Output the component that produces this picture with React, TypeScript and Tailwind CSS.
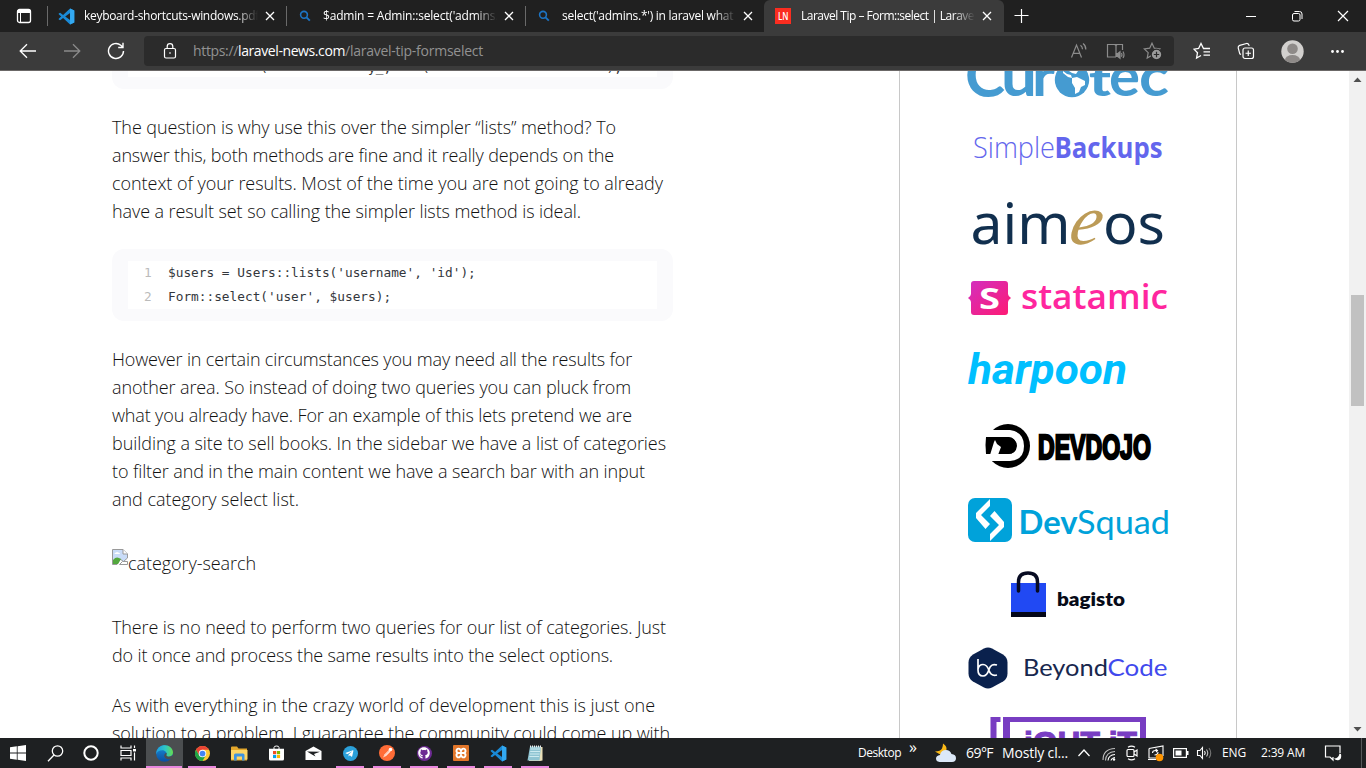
import React, { useLayoutEffect, useRef, useState } from "react";
import { FaGithub, FaTelegramPlane } from "react-icons/fa";

/* One line of text whose tracking is set so that it spans `w` pixels. */
function Fit({ w, children, className = "" }: { w: number; children: React.ReactNode; className?: string }) {
  const ref = useRef<HTMLSpanElement>(null);
  const [ls, setLs] = useState(0);
  useLayoutEffect(() => {
    const el = ref.current;
    if (!el) return;
    const n = (el.textContent || "").length;
    setLs((w - el.getBoundingClientRect().width) / n);
  }, [w]);
  return (
    <span ref={ref} className={`inline-block whitespace-pre ${className}`} style={{ letterSpacing: ls }}>
      {children}
    </span>
  );
}

function VsCode({ size }: { size: number }) {
  return (
    <svg width={size} height={size} viewBox="0 0 24 24">
      <path fillRule="evenodd" fill="#1a8ad6" d="M17 .8 7.2 10 3 6.8 1 7.800v1L4.500 12 1 15.200v1l2 1L7.200 14 17 23.200l6-2.700V3.500ZM17 7v10l-6.800-5Z" />
      <path fill="#33a9f2" d="M17 .8 23 3.500v17l-6 2.700Z" />
    </svg>
  );
}

const SearchFav = () => (
  <svg width="12" height="12" viewBox="0 0 12 12" fill="none" stroke="#1c74c4" strokeWidth="1.600">
    <circle cx="5" cy="4.800" r="3.400" />
    <path d="M7.500 7.300 10.800 10.700" strokeWidth="1.900" />
  </svg>
);

const LaravelNews = () => (
  <svg width="16" height="16" viewBox="0 0 16 16">
    <rect width="16" height="16" fill="#fb2d20" />
    <text x="3" y="11.800" fontSize="10.500" fontWeight="600" fontFamily="Open Sans" fill="#fff" textLength="10.500" lengthAdjust="spacingAndGlyphs">LN</text>
  </svg>
);

const CloseX = () => (
  <svg width="10" height="10" viewBox="0 0 10 10" stroke="#fff" strokeWidth="1.300">
    <path d="M1 1 9 9M9 1 1 9" />
  </svg>
);

function Tab({ icon, title, w, active }: { icon: React.ReactNode; title: string; w: number; active?: boolean }) {
  return (
    <div className={`flex h-8 w-[239px] shrink-0 items-center ${active ? "w-[240px] rounded-t-md bg-[#3b3b3b]" : ""}`}>
      <div className={`h-5 w-px ${active ? "" : "bg-[#6a6a6a]"}`} />
      <div className="flex w-9 items-center justify-center">{icon}</div>
      <div className="w-[174px] overflow-hidden text-[12px] leading-4 text-white [mask-image:linear-gradient(to_right,black_152px,transparent_174px)]">
        <Fit w={w}>{title}</Fit>
      </div>
      <div className="ml-[7px] flex w-[10px]"><CloseX /></div>
    </div>
  );
}

function TabStrip() {
  return (
    <div className="flex h-8 w-full shrink-0 items-center bg-[#202020]">
      <div className="flex w-[47px] justify-center">
        <svg width="16" height="16" viewBox="0 0 16 16" fill="none" stroke="#fff">
          <rect x="1.500" y="1.500" width="13" height="13" rx="2" strokeWidth="1.300" />
          <path d="M1.500 3.500h13" strokeWidth="3" />
          <path d="M4.500 4v10" />
        </svg>
      </div>
      <Tab icon={<VsCode size={17} />} title="keyboard-shortcuts-windows.pdf" w={175} />
      <Tab icon={<SearchFav />} title="$admin = Admin::select('admins.*'" w={184} />
      <Tab icon={<SearchFav />} title="select('admins.*') in laravel what does" w={200} />
      <Tab icon={<LaravelNews />} title="Laravel Tip – Form::select | Laravel News" w={207} active />
      <svg className="ml-[10px]" width="16" height="16" viewBox="0 0 16 16" stroke="#fff" strokeWidth="1.200">
        <path d="M7.500 1v14M.5 7.500h14" />
      </svg>
      <div className="ml-auto flex items-center">
        <svg width="46" height="32" viewBox="0 0 46 32" stroke="#fff"><path d="M18 16.500h10" /></svg>
        <svg width="46" height="32" viewBox="0 0 46 32" fill="none" stroke="#fff">
          <rect x="18.500" y="13.500" width="7.500" height="7.500" rx="1.500" />
          <path d="M20.500 11.500h5a2.500 2.500 0 0 1 2.500 2.500v5" />
        </svg>
        <svg width="46" height="32" viewBox="0 0 46 32" stroke="#fff" strokeWidth="1.200"><path d="M18 11 28 21M28 11 18 21" /></svg>
      </div>
    </div>
  );
}

const STAR = "M9 1.200 11.300 6.200 16.800 6.900 12.800 10.600 13.800 16 9 13.300 4.200 16 5.200 10.600 1.200 6.900 6.700 6.200Z";

function Toolbar() {
  return (
    <div className="flex h-[39px] w-full shrink-0 items-center border-b border-[#6b6867] bg-[#3b3b3b]">
      <svg className="ml-[19px]" width="18" height="16" viewBox="0 0 18 16" fill="none" stroke="#fff" strokeWidth="1.300"><path d="M17 8H1.500M8 1.200 1.200 8 8 14.800" /></svg>
      <svg className="ml-[26px]" width="18" height="16" viewBox="0 0 18 16" fill="none" stroke="#8a8a8a" strokeWidth="1.300"><path d="M1 8h15.500M10 1.200 16.800 8 10 14.800" /></svg>
      <svg className="ml-[26px]" width="18" height="18" viewBox="0 0 18 18" fill="none" stroke="#fff" strokeWidth="1.400">
        <path d="M16.500 9A7.500 7.500 0 1 1 13.800 3.200L15.700 5M16 .8V5.500H11.200" />
      </svg>
      <div className="ml-[19px] flex h-[30px] w-[1030px] items-center rounded bg-[#2b2b2b]">
        <svg className="ml-[19px]" width="14" height="16" viewBox="0 0 14 16" fill="none" stroke="#fff" strokeWidth="1.200">
          <rect x="1.500" y="5.500" width="11" height="9.500" rx="1.500" />
          <path d="M4.200 5.500V3.500a2.800 2.800 0 0 1 5.600 0v2" />
          <rect x="6.300" y="9.300" width="1.400" height="1.400" fill="#fff" stroke="none" />
        </svg>
        <div className="ml-4 text-[14px] leading-5 text-[#929292]">
          <Fit w={45}>https://</Fit>
          <Fit w={107} className="text-white">laravel-news.com</Fit>
          <Fit w={138}>/laravel-tip-formselect</Fit>
        </div>
        <div className="ml-auto flex items-center pr-[11px]">
          <svg width="18" height="18" viewBox="0 0 18 18" fill="none" stroke="#8c8c8c" strokeWidth="1.200">
            <path d="M1.500 15.500 6.500 3l5 12.500M3.200 11.300h6.600M10.500 3.200q2 1.500 2 4M13 1.500q3 2.300 2.800 6" />
          </svg>
          <svg className="ml-[18px]" width="20" height="18" viewBox="0 0 20 18" fill="none" stroke="#8c8c8c" strokeWidth="1.200">
            <path d="M10 15H1.500V2.500h7.200L10 3.500V15M9 2.500h7.500V8M10 3.500l1-1" />
            <path d="M10.500 11.500h1.300L14 9.800v6.500L11.800 14.500h-1.300Z" fill="#8c8c8c" />
            <path d="M15.500 11q1 1.800 0 3.800M17 9.500q2 3.500 0 6.500" />
          </svg>
          <svg className="ml-[17px]" width="20" height="18" viewBox="0 0 20 18" fill="none" stroke="#8c8c8c" strokeWidth="1.200">
            <path d={STAR} />
            <circle cx="13.500" cy="12.500" r="5.300" fill="#9a9a9a" stroke="#2b2b2b" />
            <path d="M13.500 9.800v5.400M10.800 12.500h5.400" stroke="#2b2b2b" />
          </svg>
        </div>
      </div>
      <svg className="ml-[19px]" width="18" height="18" viewBox="0 0 18 18" fill="none" stroke="#fff" strokeWidth="1.300">
        <path d="M14 6.500H10.500L8 1.500 5.600 6.500 1 7.200 4.500 10.700 3.600 16 8 13.500M10.500 9.800H17M10.500 13.200H17M13 6.500h4" />
      </svg>
      <svg className="ml-[26px]" width="18" height="18" viewBox="0 0 18 18" fill="none" stroke="#fff" strokeWidth="1.200">
        <rect x="6" y="6" width="10.500" height="10.500" rx="2" />
        <path d="M11.250 8.500v5.500M8.500 11.250H14M4 12.500 2.800 11.800 1.200 5.800Q.9 4 2.700 3.400L9.500 1.500Q11.500 1.200 12.300 3.800" />
      </svg>
      <svg className="ml-[26px]" width="23" height="23" viewBox="0 0 23 23">
        <defs><clipPath id="ava"><circle cx="11.500" cy="11.500" r="11.200" /></clipPath></defs>
        <g clipPath="url(#ava)">
          <rect width="23" height="23" fill="#d2d0ce" />
          <circle cx="11.500" cy="8.800" r="5.300" fill="#8e8a88" />
          <ellipse cx="11.500" cy="20" rx="7.500" ry="5" fill="#8e8a88" />
        </g>
      </svg>
      <svg className="ml-[26px]" width="15" height="5" viewBox="0 0 15 5" fill="#fff">
        <circle cx="2.500" cy="2.500" r="1.400" /><circle cx="7.500" cy="2.500" r="1.400" /><circle cx="12.500" cy="2.500" r="1.400" />
      </svg>
    </div>
  );
}

function Para({ lines, className = "" }: { lines: [string, number][]; className?: string }) {
  return (
    <p className={`text-[18px] leading-7 font-light text-[#111] ${className}`}>
      {lines.map(([t, w]) => (
        <span key={t} className="block h-7"><Fit w={w}>{t}</Fit></span>
      ))}
    </p>
  );
}

function Article() {
  return (
    <div className="ml-28 w-[561px] shrink-0">
      <div className="h-[18px] overflow-hidden rounded-b-xl bg-[#fafafc] px-4">
        <div className="flex h-[6px] flex-col justify-end overflow-hidden bg-white font-['DejaVu_Sans_Mono',monospace] text-[12.790px] text-[#333]">
          <span className="mb-[2px] block pl-10 leading-[14px] whitespace-pre">{"            (             y_,    (                       );"}</span>
        </div>
      </div>
      <Para
        className="mt-6"
        lines={[
          ["The question is why use this over the simpler “lists” method? To", 504],
          ["answer this, both methods are fine and it really depends on the", 502],
          ["context of your results. Most of the time you are not going to already", 551],
          ["have a result set so calling the simpler lists method is ideal.", 469],
        ]}
      />
      <div className="mt-6 h-[72px] rounded-xl bg-[#fafafc] px-4 py-3">
        <div className="h-12 bg-white font-['DejaVu_Sans_Mono',monospace] text-[12.790px] leading-6 whitespace-pre text-[#33373c]">
          <div className="flex"><span className="w-10 pl-4 text-[#bbb]">1</span>{"$users = Users::lists('username', 'id');"}</div>
          <div className="flex"><span className="w-10 pl-4 text-[#bbb]">2</span>{"Form::select('user', $users);"}</div>
        </div>
      </div>
      <Para
        className="mt-6"
        lines={[
          ["However in certain circumstances you may need all the results for", 520],
          ["another area. So instead of doing two queries you can pluck from", 519],
          ["what you already have. For an example of this lets pretend we are", 520],
          ["building a site to sell books. In the sidebar we have a list of categories", 554],
          ["to filter and in the main content we have a search bar with an input", 533],
          ["and category select list.", 187],
        ]}
      />
      <div className="mt-9 flex h-[30px] text-[18px] leading-7 font-light text-[#111]">
        <svg width="16" height="16" viewBox="0 0 16 16">
          <path d="M.5.500h10.500l4.500 4.500V9l-4 3.500L8 10 5 15.500H.500Z" fill="#c9dcf8" stroke="#999" />
          <path d="M11 .5V5h4.500" fill="#fff" stroke="#999" />
          <path d="M1 15v-4q3-3.500 6-2l2 1-3 5Z" fill="#53a83d" />
          <path d="M2.500 5q0-1.500 1.500-1.500 1-1.200 2.200 0Q8 3.500 8 5Z" fill="#fff" />
          <path d="m7.500 15.500 3-3h5v3Z" fill="#fff" stroke="#999" />
        </svg>
        <Fit w={128}>category-search</Fit>
      </div>
      <Para
        className="mt-[34px]"
        lines={[
          ["There is no need to perform two queries for our list of categories. Just", 554],
          ["do it once and process the same results into the select options.", 501],
        ]}
      />
      <Para
        className="mt-[22px]"
        lines={[
          ["As with everything in the crazy world of development this is just one", 543],
          ["solution to a problem. I guarantee the community could come up with", 558],
        ]}
      />
    </div>
  );
}

/* A sponsor row; the drawing inside uses page coordinates starting at (900, y). */
function Logo({ y, h, children }: { y: number; h: number; children: React.ReactNode }) {
  return (
    <svg className="block shrink-0" width="336" height={h} viewBox={`900 ${y} 336 ${h}`}>
      {children}
    </svg>
  );
}

function T({ x, y, s, w, f = "Open Sans", b = 400, c, i, children }: { x: number; y: number; s: number; w: number; f?: string; b?: number; c: string; i?: boolean; children: string }) {
  return (
    <text x={x} y={y} fontSize={s} fontFamily={f} fontWeight={b} fill={c} fontStyle={i ? "italic" : "normal"} textLength={w} lengthAdjust="spacingAndGlyphs">
      {children}
    </text>
  );
}

function Sponsors() {
  return (
    <div className="ml-[226px] flex w-[338px] shrink-0 flex-col border-x border-[#c8c8c8]">
      <Logo y={71} h={44}>
        <T x={965} y={96.500} s={61} w={40} f="Lato" b={700} c="#459bd1">C</T>
        <T x={1001} y={96} s={62} w={36} f="Lato" b={700} c="#459bd1">u</T>
        <T x={1032} y={96} s={56} w={23} f="Lato" b={700} c="#459bd1">r</T>
        <T x={1089} y={96} s={44} w={22} f="Lato" b={900} c="#459bd1">t</T>
        <T x={1109} y={96} s={56} w={31} f="Lato" b={700} c="#459bd1">e</T>
        <T x={1139} y={96} s={56} w={30} f="Lato" b={700} c="#459bd1">c</T>
        <circle cx="1072" cy="80" r="17.200" fill="#459bd1" />
        <path d="M1072 78l5-1 8 4 0 4-4 2-2 5-4 2 0-6-3-5ZM1063 71l4 3 4 1 1 3-4-1-5-4ZM1069 71h9l-2 3-4-1Z" fill="#fff" />
      </Logo>
      <Logo y={115} h={65}>
        <T x={973} y={158} s={29} w={82} f="Open Sans" b={300} c="#6366ed">Simple</T>
        <T x={1054.500} y={158} s={29} w={108} f="Open Sans" b={700} c="#6366ed">Backups</T>
      </Logo>
      <Logo y={180} h={85}>
        <T x={970.500} y={243.500} s={56} w={100} f="Noto Sans" c="#112f4e">aim</T>
        <text transform="translate(1067 243.500) skewX(-12)" fontFamily="Liberation Serif" fontStyle="italic" fontSize="71" fill="#bc9b57">e</text>
        <T x={1103} y={243.500} s={56} w={62} f="Noto Sans" c="#112f4e">os</T>
      </Logo>
      <Logo y={265} h={68}>
        <defs><linearGradient id="st" x1="0" y1="0" x2="1" y2="1"><stop stopColor="#d22fc0" /><stop offset="1" stopColor="#ff1a72" /></linearGradient></defs>
        <path d="M974 281h31q3 0 3 3v10q0 2 3 4-3 2-3 4v10q0 3-3 3h-31q-3 0-3-3v-10q0-2-3-4 3-2 3-4v-10q0-3 3-3Z" fill="url(#st)" />
        <T x={979} y={309} s={29} w={21} b={700} c="#fff">S</T>
        <T x={1021} y={309} s={35} w={147} f="Open Sans" b={600} c="#ff269e">statamic</T>
      </Logo>
      <Logo y={333} h={77}>
        <T x={968} y={384} s={42} w={159} f="Roboto" b={700} i c="#00bfff">harpoon</T>
      </Logo>
      <Logo y={410} h={70}>
        <circle cx="1008" cy="446" r="22" />
        <path d="M984 430h26q14 2 14 16t-14 15H984v-7h24q8 0 9-8 0-7-9-9H984Z" fill="#fff" />
        <path d="M986 437h22q8 0 8 8.500t-8 8.500h-22q-1-9 0-17Z" />
        <path d="m990 455 4-13 1-2 2 4 4 3-3 8Z" fill="#fff" />
        <g stroke="#000" strokeWidth="2.500">
          <text transform="translate(1038 458.500) scale(.68 1)" fontFamily="Liberation Sans" fontWeight="700" fontSize="34.500" textLength="166" lengthAdjust="spacingAndGlyphs">DEVDOJO</text>
        </g>
      </Logo>
      <Logo y={480} h={76}>
        <rect x="968" y="498" width="44" height="44" rx="7" fill="#00a2da" />
        <path d="M990 499v7l-9 9 9 9-4.500 5L976 518v-5ZM990 541v-7l9-9-9-9 4.500-5L1004 522v5Z" fill="#fff" />
        <T x={1018.500} y={533.500} s={32} w={59} f="Lato" b={700} c="#00a2da">Dev</T>
        <T x={1077} y={533.500} s={33} w={93} f="Lato" c="#00a2da">Squad</T>
      </Logo>
      <Logo y={556} h={76}>
        <path fill="#2149f3" d="M1011 583h35v30h-35z" />
        <path fill="#040718" d="M1011 612h35v5h-35z" />
        <path d="M1018.500 591v-9q0-9 9.500-9t9.500 9v9" fill="none" stroke="#070b22" strokeWidth="3.500" strokeLinecap="round" />
        <T x={1057} y={605.500} s={18.500} w={68} f="Lato" b={800} c="#070b18">bagisto</T>
      </Logo>
      <Logo y={632} h={70}>
        <path d="M984 648.500q4-2 8 0l11 6q4.500 3 4.500 8v11q0 5-4.500 8l-11 6q-4 2-8 0l-11-6q-4.500-3-4.500-8v-11q0-5 4.500-8Z" fill="#0a214d" />
        <g fill="none" stroke="#fff" strokeWidth="1.700"><path d="M978 659v11q0 6 5 6 4 0 6-6.500t8-4.500M978 669q1-4.500 5-4.500t6 6 8 4.500" /></g>
        <T x={1023} y={676} s={24} w={85} f="Lato" c="#18284e">Beyond</T>
        <T x={1107.500} y={676} s={24} w={60} f="Lato" c="#4149ed">Code</T>
      </Logo>
      <Logo y={702} h={36}>
        <path d="M990.500 717h10v5h-4v20h-6zM1003 717h143v25h-6v-20h-130v20h-7z" fill="#783dc2" />
        <g stroke="#783dc2" strokeWidth="1.200"><T x={1024} y={755} s={34} w={113} f="Liberation Sans" b={700} c="#783dc2">iGHT iT</T></g>
      </Logo>
    </div>
  );
}

function ScrollBar() {
  return (
    <div className="ml-auto flex w-[17px] shrink-0 flex-col items-center bg-[#f1f1f1]">
      <svg width="17" height="17" viewBox="0 0 17 17"><path d="M4.500 11h8l-4-4.500Z" fill="#505050" /></svg>
      <div className="mt-[207px] mb-auto h-[111px] w-[13px] bg-[#c1c1c1]" />
      <svg width="17" height="17" viewBox="0 0 17 17"><path d="M4.500 6h8l-4 4.500Z" fill="#505050" /></svg>
    </div>
  );
}

function TaskIcon({ children, on, active }: { children: React.ReactNode; on?: boolean; active?: boolean }) {
  return (
    <div className={`flex h-[30px] w-[37px] shrink-0 flex-col ${active ? "bg-[#4b4e50]" : ""}`}>
      <div className="flex h-7 w-9 items-center justify-center pt-0.5">{children}</div>
      <div className={`h-0.5 ${active ? "w-9" : "ml-1 w-7"} ${on ? "bg-[#e887de]" : ""}`} />
    </div>
  );
}

function Taskbar() {
  return (
    <div className="flex h-[30px] w-full shrink-0 items-center bg-[#1e2022] text-[12px] text-white">
      <TaskIcon><svg width="16" height="16" viewBox="0 0 16 16" fill="#fff"><path d="M0 2.300 6.800 1.300V7.500H0ZM7.600 1.200 16 0v7.500H7.600ZM0 8.400h6.800v6.300L0 13.700ZM7.600 8.400H16V16l-8.400-1.200Z" /></svg></TaskIcon>
      <TaskIcon><svg width="17" height="17" viewBox="0 0 17 17" fill="none" stroke="#fff" strokeWidth="1.300"><circle cx="10.500" cy="6" r="5.200" /><path d="m7 10-6 6.300" /></svg></TaskIcon>
      <div className="-ml-px"><TaskIcon><svg width="16" height="16" viewBox="0 0 16 16" fill="none" stroke="#fff" strokeWidth="2"><circle cx="8" cy="8" r="6.700" /></svg></TaskIcon></div>
      <TaskIcon>
        <svg width="17" height="16" viewBox="0 0 17 16" fill="none" stroke="#fff" strokeWidth="1.200">
          <path d="M1 .5V3h10V.500M1 15.500V13h10v2.500M1 5.500h10v5H1zM14.500.500V3M14.500 7.500v8" /><path d="M13 5.200h3" strokeWidth="2.500" />
        </svg>
      </TaskIcon>
      <div className="-ml-px"><TaskIcon on active>
        <svg width="17" height="17" viewBox="0 0 24 24">
          <defs>
            <linearGradient id="e1" x1="0" x2="1"><stop stopColor="#1e9de0" /><stop offset=".55" stopColor="#2fc8c4" /><stop offset="1" stopColor="#66dd4c" /></linearGradient>
            <linearGradient id="e2" x1="0" y1="0" x2="0" y2="1"><stop stopColor="#1a8ed8" /><stop offset="1" stopColor="#0a4ea0" /></linearGradient>
          </defs>
          <circle cx="12" cy="12" r="11.800" fill="url(#e2)" />
          <path d="M.4 10C2 3.500 7 .2 12.500.200 19 .2 24 5 24 10.500c0 4-3 6-6 6-3.500 0-4-1.500-3.500-2.500C16 11 13 7.500 9 7.500 4.500 7.500 1.500 9.500.4 13Z" fill="url(#e1)" />
          <path d="M14.500 14q0 2.500 3.500 2.500 3 0 5-2l1 4-3 1.500q-8 1-9.500-4.500 0-3 3-4.500 1.500 1.500 0 3Z" fill="#4b4e50" />
        </svg>
      </TaskIcon></div>
      <div className="ml-px"><TaskIcon on>
        <svg width="15" height="15" viewBox="0 0 24 24">
          <circle cx="12" cy="12" r="12" fill="#fcc934" />
          <path d="M12 6h10.400A12 12 0 0 0 1.600 6l5.200 9Z" fill="#ea4335" />
          <path d="M1.600 6A12 12 0 0 0 12 24l5.200-9H6.800Z" fill="#1ea446" />
          <circle cx="12" cy="12" r="6" fill="#fff" /><circle cx="12" cy="12" r="4.600" fill="#4285f4" />
        </svg>
      </TaskIcon></div>
      <TaskIcon>
        <svg width="17" height="15" viewBox="0 0 17 15">
          <path d="M0 1.500Q0 .5 1 .500h5l1.500 2H16v12H0Z" fill="#e3a72c" /><path d="M0 4h16.500v9.500H0Z" fill="#fcd666" />
          <path d="M3 14.500V9q0-1.500 1.500-1.500h7.500Q13.500 7.500 13.500 9v5.500H11v-4H5.700v4Z" fill="#3e94e0" />
        </svg>
      </TaskIcon>
      <TaskIcon>
        <svg width="15" height="16" viewBox="0 0 15 16">
          <path d="M5 4V2.500Q5 1 7.500 1T10 2.500V4" fill="none" stroke="#fff" /><path d="M0 3.700h15V14q0 1.500-1.500 1.500h-12Q0 15.500 0 14Z" fill="#fff" />
          <path d="M4 6h3.200v3.200H4z" fill="#f25022" /><path d="M7.900 6h3.200v3.200H7.900z" fill="#7fba00" /><path d="M4 9.900h3.200v3.200H4z" fill="#00a4ef" /><path d="M7.900 9.900h3.200v3.200H7.900z" fill="#ffb900" />
        </svg>
      </TaskIcon>
      <TaskIcon>
        <svg width="17" height="14" viewBox="0 0 17 14"><path d="M.5 5 8.500.500l8 4.500v9H.500Z" fill="#fff" /><path d="m2 5.500 13 .3L9 8l1.500 2.500-4-2.200Z" fill="#1e2022" /></svg>
      </TaskIcon>
      <TaskIcon on>
        <div className="flex size-[15px] items-center justify-center rounded-full bg-[#2ba0da] pr-px"><FaTelegramPlane size={9} /></div>
      </TaskIcon>
      <TaskIcon on>
        <svg width="16" height="16" viewBox="0 0 16 16"><circle cx="8" cy="8" r="8" fill="#ff6c37" /><path d="m4 12.500 1.500-3L10 5l1.500 1.500L7 11Z" fill="#fff" /><circle cx="11.500" cy="4.500" r="1.800" fill="#fff" /><path d="m4 12.500 6.500-6.700" stroke="#ff6c37" strokeWidth=".6" /></svg>
      </TaskIcon>
      <TaskIcon on>
        <div className="flex size-[15px] items-center justify-center rounded-full bg-[#6d2a93]"><FaGithub size={12} /></div>
      </TaskIcon>
      <TaskIcon on>
        <svg width="16" height="16" viewBox="0 0 16 16"><rect width="16" height="16" rx="1" fill="#e2762a" /><path d="M5.200 8h5.600M5.200 8a2 2 0 0 1-1.700-2.400q.3-2 2-2Q7.300 3.600 8 6q.7-2.400 2.500-2.400 1.700 0 2 2A2 2 0 0 1 10.800 8a2 2 0 0 1 1.700 2.400q-.3 2-2 2Q8.700 12.400 8 10q-.7 2.400-2.500 2.400-1.700 0-2-2A2 2 0 0 1 5.200 8Z" fill="none" stroke="#fff" strokeWidth="1.900" /></svg>
      </TaskIcon>
      <TaskIcon on><VsCode size={17} /></TaskIcon>
      <TaskIcon on>
        <svg width="16" height="17" viewBox="0 0 16 17"><path d="M4 2h11.500v13.500L13 16H2Z" fill="#e9dfb8" /><path d="M3 1.500h11l-1.500 14H.500Z" fill="#8fc4d2" /><path d="M3.500 4h9.800M3.200 6.500h9.800M2.800 9h9.800M2.400 11.500h9.800" stroke="#cdeaf0" /><path d="M3 1.500h11" stroke="#eee" strokeWidth="2" strokeDasharray="1 1" /></svg>
      </TaskIcon>

      <div className="ml-auto flex h-[30px] w-[508px] shrink-0 items-center">
        <div className="w-[51px]"><Fit w={43}>Desktop</Fit></div>
        <div className="-mt-3 w-[25px] text-[16px] leading-4"><Fit w={9}>»</Fit></div>
        <svg width="23" height="20" viewBox="0 0 23 20">
          <path d="M9 .5q5 3 3 8L7 12 1 8.500q5.500 0 7-3Q9 3 9 .500Z" fill="#fbb917" />
          <path d="M5.500 19Q2 18.500 2 15.500T6 12q1-5 6-5 4 0 5.500 4 4.500.5 4.500 4.200 0 3.500-4 3.800Z" fill="#dce8f8" />
        </svg>
        <div className="ml-[9px] w-9 text-[14px] leading-5"><Fit w={27}>69°F</Fit></div>
        <div className="w-[75px] text-[14px] leading-5"><Fit w={66}>Mostly cl...</Fit></div>
        <svg width="14" height="14" viewBox="0 0 14 14" fill="none" stroke="#fff" strokeWidth="1.300"><path d="m1.500 10 5.500-6 5.500 6" /></svg>
        <svg className="ml-[11px]" width="15" height="15" viewBox="0 0 15 15" fill="none" stroke="#fff" strokeWidth="1.100">
          <path d="M1 14Q1 3 13 2.500M3.500 14.500Q4 6 13 5.500" stroke="#c0c0c0" /><path d="M6 14.500Q6.500 9 13 8.500M9 14.500Q9.500 12 13 11.500" /><circle cx="12" cy="13.500" r="1.200" fill="#fff" stroke="none" />
        </svg>
        <svg className="ml-[8px]" width="16" height="16" viewBox="0 0 16 16" fill="none" stroke="#fff" strokeWidth="1.200">
          <rect x="2" y="4.500" width="7" height="7" rx="1" /><path d="m9 7 3-2v6L9 9M3 2.200Q6.500 0 10 2.200M3 13.800Q6.500 16 10 13.800" />
        </svg>
        <svg className="ml-[6px]" width="18" height="18" viewBox="0 0 18 18" fill="none" stroke="#fff" strokeWidth="1.100">
          <path d="M2 4.500 16 2V12M2 4.500V14h7M1 15.500h8M5.500 9q0-2.500 3-2.500h2M8.500 4.800 10.500 6.500 9 8M11 8q0 3-3.500 3" /><circle cx="12.500" cy="13.500" r="3.800" fill="#ff9500" stroke="none" />
        </svg>
        <svg className="ml-[8px]" width="16" height="10" viewBox="0 0 16 10"><rect x=".600" y=".600" width="12.800" height="8.800" fill="none" stroke="#fff" strokeWidth="1.200" /><path d="M2.500 2.500h6v5h-6zM14 3h1.500v4H14z" fill="#fff" /></svg>
        <svg className="ml-[7px]" width="18" height="16" viewBox="0 0 18 16" fill="none" stroke="#fff" strokeWidth="1.100">
          <path d="M1.500 5.500H4L6.500 2.500v11L4 10.500H1.500ZM8.500 6q1.500 2 0 4" /><path d="M10.500 4.500q2.500 3.500 0 7" stroke="#bbb" /><path d="M13 3q3.500 5 0 10" stroke="#777" />
        </svg>
        <div className="ml-[8px] w-[39px]"><Fit w={24}>ENG</Fit></div>
        <div className="w-[63px]"><Fit w={44}>2:39 AM</Fit></div>
        <svg width="18" height="18" viewBox="0 0 18 18" fill="none" stroke="#fff" strokeWidth="1.200"><path d="M16 9V2H1.500v11H6l3 3v-3" /><path d="M15.500 9.500q-1 5-5.500 5 2 2.500 5 1.500t2-6Z" fill="#fff" stroke="none" /></svg>
        <div className="mr-1 ml-auto h-[30px] w-px bg-[#55585a]" />
      </div>
    </div>
  );
}

export default function App() {
  return (
    <div className="flex h-[768px] w-[1366px] flex-col overflow-hidden bg-white font-['Open_Sans','Noto_Sans',sans-serif]">
      <TabStrip />
      <Toolbar />
      <div className="flex h-[667px] w-full shrink-0 overflow-hidden bg-white">
        <Article />
        <Sponsors />
        <ScrollBar />
      </div>
      <Taskbar />
    </div>
  );
}
